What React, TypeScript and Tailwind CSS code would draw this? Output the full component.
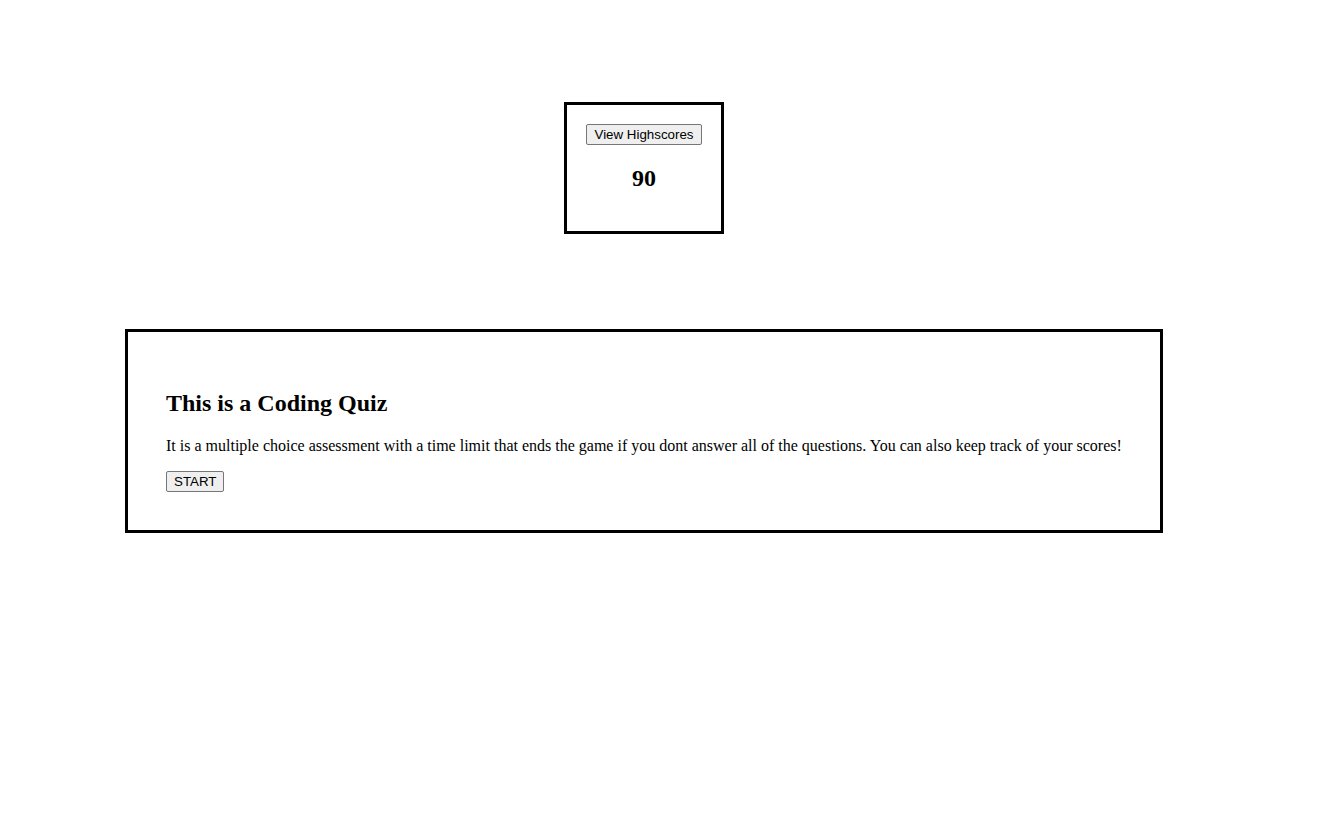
export default function App() {
  const btn =
    "h-[21px] px-[7px] bg-[#efefef] border border-[#767676] rounded-[2px] text-[13.333px] leading-[15px] text-black font-['Liberation_Sans',Arial,sans-serif]";
  return (
    <div className="min-h-[831px] bg-white font-['Liberation_Serif','Times_New_Roman',serif] text-black">
      <div className="w-[1288px] flex flex-col items-center pt-[102px]">
        <div className="w-[160px] h-[132px] border-[3px] border-black flex flex-col items-center pt-[19px]">
          <button className={btn}>View Highscores</button>
          <h2 className="mt-[19px] text-[24px] leading-[28px] font-bold">90</h2>
        </div>
        <div className="mt-[95px] w-[1038px] h-[204px] border-[3px] border-black pl-[38px] pt-[57px]">
          <h2 className="text-[24px] leading-[28px] font-bold">This is a Coding Quiz</h2>
          <p className="mt-[20px] text-[16px] leading-[18px]">
            It is a multiple choice assessment with a time limit that ends the game if you dont answer all of the questions. You can also keep track of your scores!
          </p>
          <button className={`${btn} mt-[16px]`}>START</button>
        </div>
      </div>
    </div>
  );
}
